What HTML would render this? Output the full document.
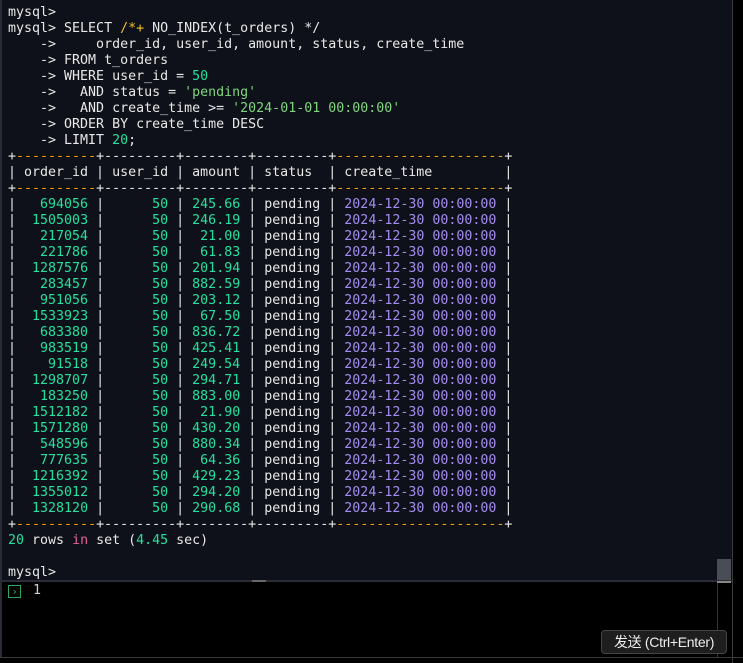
<!DOCTYPE html>
<html><head><meta charset="utf-8"><style>
html,body{margin:0;padding:0;width:743px;height:663px;background:#000;overflow:hidden}
#term{position:absolute;left:0;top:0;width:732px;height:580px;background:#0e1119;border-left:2px solid #2a2d35;box-sizing:border-box}
pre{position:absolute;left:6px;top:5px;margin:0;font-family:"DejaVu Sans Mono","Liberation Mono",monospace;font-size:13.3px;line-height:16px;color:#e8e8e8;letter-spacing:0}
.g{color:#26e0a0}.o{color:#f0a000}.p{color:#a48cf0}.s{color:#7fd67f}.y{color:#f0c030}.k{color:#e0609a}
#sb{position:absolute;left:717px;top:559px;width:14px;height:21px;background:#4a4d55}
#sep{position:absolute;left:0;top:580px;width:732px;height:2px;background:#2a2d35}
#grip{position:absolute;left:252px;top:580px;width:14px;height:2px;background:#666}
#grip2{position:absolute;left:717px;top:581px;width:14px;height:2px;background:#888}
#vl{position:absolute;left:717px;top:583px;width:1px;height:75px;background:#333}
#vr{position:absolute;left:732px;top:0;width:1px;height:663px;background:#3a3a3a}
#bl{position:absolute;left:0;top:657px;width:743px;height:1px;background:#3a3a3a}
#lb{position:absolute;left:0;top:582px;width:2px;height:76px;background:#2a2d35}
#chev{position:absolute;left:8px;top:585px;width:13px;height:13px;border:1px solid #2ea860;box-sizing:border-box;color:#2ea860;font:11px/11px "DejaVu Sans Mono",monospace;text-align:center}
#one{position:absolute;left:33px;top:583px;color:#cfcfcf;font:13.3px/16px "DejaVu Sans Mono",monospace}
#btn{position:absolute;left:601px;top:630px;width:126px;height:24px;background:#1e1e1e;border:1px solid #444;border-radius:4px;box-sizing:border-box;color:#eee;font:14px/22px "Liberation Sans","Noto Sans CJK SC",sans-serif;text-align:center;letter-spacing:-0.3px}
</style></head><body>
<div id="term"><pre>mysql>
mysql> SELECT <span class="y">/*+</span> NO_INDEX(t_orders) */
    ->     order_id, user_id, amount, status, create_time
    -> FROM t_orders
    -> WHERE user_id = <span class="g">50</span>
    ->   AND status = <span class="s">'pending'</span>
    ->   AND create_time >= <span class="s">'2024-01-01 00:00:00'</span>
    -> ORDER BY create_time DESC
    -> LIMIT <span class="g">20</span>;
+<span class="o">----------</span>+---------+--------+---------+<span class="o">---------------------</span>+
| order_id | user_id | amount | status  | create_time         |
+<span class="o">----------</span>+---------+--------+---------+<span class="o">---------------------</span>+
|   <span class="g">694056</span> |      <span class="g">50</span> | <span class="g">245.66</span> | pending | <span class="p">2024-12-30 00:00:00</span> |
|  <span class="g">1505003</span> |      <span class="g">50</span> | <span class="g">246.19</span> | pending | <span class="p">2024-12-30 00:00:00</span> |
|   <span class="g">217054</span> |      <span class="g">50</span> |  <span class="g">21.00</span> | pending | <span class="p">2024-12-30 00:00:00</span> |
|   <span class="g">221786</span> |      <span class="g">50</span> |  <span class="g">61.83</span> | pending | <span class="p">2024-12-30 00:00:00</span> |
|  <span class="g">1287576</span> |      <span class="g">50</span> | <span class="g">201.94</span> | pending | <span class="p">2024-12-30 00:00:00</span> |
|   <span class="g">283457</span> |      <span class="g">50</span> | <span class="g">882.59</span> | pending | <span class="p">2024-12-30 00:00:00</span> |
|   <span class="g">951056</span> |      <span class="g">50</span> | <span class="g">203.12</span> | pending | <span class="p">2024-12-30 00:00:00</span> |
|  <span class="g">1533923</span> |      <span class="g">50</span> |  <span class="g">67.50</span> | pending | <span class="p">2024-12-30 00:00:00</span> |
|   <span class="g">683380</span> |      <span class="g">50</span> | <span class="g">836.72</span> | pending | <span class="p">2024-12-30 00:00:00</span> |
|   <span class="g">983519</span> |      <span class="g">50</span> | <span class="g">425.41</span> | pending | <span class="p">2024-12-30 00:00:00</span> |
|    <span class="g">91518</span> |      <span class="g">50</span> | <span class="g">249.54</span> | pending | <span class="p">2024-12-30 00:00:00</span> |
|  <span class="g">1298707</span> |      <span class="g">50</span> | <span class="g">294.71</span> | pending | <span class="p">2024-12-30 00:00:00</span> |
|   <span class="g">183250</span> |      <span class="g">50</span> | <span class="g">883.00</span> | pending | <span class="p">2024-12-30 00:00:00</span> |
|  <span class="g">1512182</span> |      <span class="g">50</span> |  <span class="g">21.90</span> | pending | <span class="p">2024-12-30 00:00:00</span> |
|  <span class="g">1571280</span> |      <span class="g">50</span> | <span class="g">430.20</span> | pending | <span class="p">2024-12-30 00:00:00</span> |
|   <span class="g">548596</span> |      <span class="g">50</span> | <span class="g">880.34</span> | pending | <span class="p">2024-12-30 00:00:00</span> |
|   <span class="g">777635</span> |      <span class="g">50</span> |  <span class="g">64.36</span> | pending | <span class="p">2024-12-30 00:00:00</span> |
|  <span class="g">1216392</span> |      <span class="g">50</span> | <span class="g">429.23</span> | pending | <span class="p">2024-12-30 00:00:00</span> |
|  <span class="g">1355012</span> |      <span class="g">50</span> | <span class="g">294.20</span> | pending | <span class="p">2024-12-30 00:00:00</span> |
|  <span class="g">1328120</span> |      <span class="g">50</span> | <span class="g">290.68</span> | pending | <span class="p">2024-12-30 00:00:00</span> |
+<span class="o">----------</span>+---------+--------+---------+<span class="o">---------------------</span>+
<span class="g">20</span> rows <span class="k">in</span> set (<span class="g">4.45</span> sec)

mysql></pre></div>
<div id="sb"></div>
<div id="sep"></div><div id="grip"></div><div id="grip2"></div>
<div id="lb"></div><div id="vl"></div><div id="vr"></div><div id="bl"></div>
<div id="chev">›</div>
<div id="one">1</div>
<div id="btn">发送 (Ctrl+Enter)</div>
</body></html>
